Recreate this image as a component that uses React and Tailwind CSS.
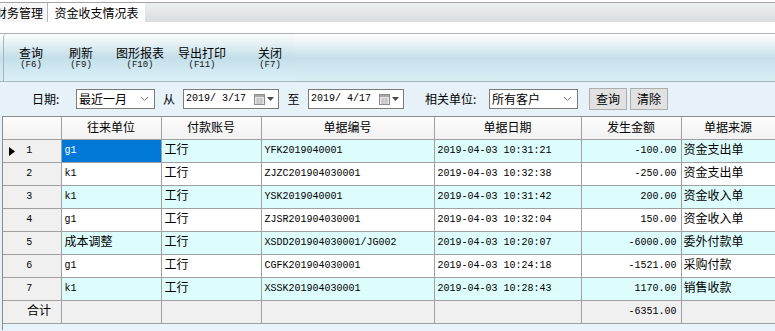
import React from "react";

const CJK = "font-['Noto_Sans_CJK_SC','Noto_Sans',sans-serif]";
const MONO = "font-['Liberation_Mono','Noto_Sans_CJK_SC',monospace]";

const rows = [
  { n: 1, unit: "g1", acct: "工行", no: "YFK2019040001", date: "2019-04-03 10:31:21", amt: "-100.00", src: "资金支出单" },
  { n: 2, unit: "k1", acct: "工行", no: "ZJZC201904030001", date: "2019-04-03 10:32:38", amt: "-250.00", src: "资金支出单" },
  { n: 3, unit: "k1", acct: "工行", no: "YSK2019040001", date: "2019-04-03 10:31:42", amt: "200.00", src: "资金收入单" },
  { n: 4, unit: "g1", acct: "工行", no: "ZJSR201904030001", date: "2019-04-03 10:32:04", amt: "150.00", src: "资金收入单" },
  { n: 5, unit: "成本调整", acct: "工行", no: "XSDD201904030001/JG002", date: "2019-04-03 10:20:07", amt: "-6000.00", src: "委外付款单" },
  { n: 6, unit: "g1", acct: "工行", no: "CGFK201904030001", date: "2019-04-03 10:24:18", amt: "-1521.00", src: "采购付款" },
  { n: 7, unit: "k1", acct: "工行", no: "XSSK201904030001", date: "2019-04-03 10:28:43", amt: "1170.00", src: "销售收款" },
];

const tools = [
  { label: "查询", key: "(F6)", w: "w-[44px]", ml: "ml-[5px]" },
  { label: "刷新", key: "(F9)", w: "w-[44px]", ml: "ml-[6px]" },
  { label: "图形报表", key: "(F10)", w: "w-[62px]", ml: "ml-[6px]" },
  { label: "导出打印", key: "(F11)", w: "w-[50px]", ml: "ml-[6px]" },
  { label: "关闭", key: "(F7)", w: "w-[38px]", ml: "ml-[24px]" },
];

function Chevron() {
  return (
    <svg width="9" height="6" viewBox="0 0 9 6" className="shrink-0">
      <polyline points="1,1 4.5,4.5 8,1" fill="none" stroke="#7a7a7a" strokeWidth="1" />
    </svg>
  );
}

function CalIcon() {
  return (
    <span className="flex items-center gap-[2px] shrink-0">
      <svg width="11" height="11" viewBox="0 0 11 11">
        <rect x="0.5" y="0.5" width="10" height="10" fill="#e8e8e8" stroke="#8c8c8c" />
        <rect x="1" y="1" width="9" height="2" fill="#a8a8a8" />
        <path d="M2 5h7M2 7h7M2 9h7M4 4v6M7 4v6" stroke="#bdbdbd" strokeWidth="1" />
      </svg>
      <svg width="7" height="4" viewBox="0 0 7 4">
        <polygon points="0,0 7,0 3.5,4" fill="#4a4a4a" />
      </svg>
    </span>
  );
}

function DateBox({ value }) {
  return (
    <div className="w-[96px] h-[20px] bg-white border border-[#7a7a7a] flex items-center justify-between pl-[2px] pr-[4px]">
      <span className={`${MONO} text-[10px] text-black`}>{value}</span>
      <CalIcon />
    </div>
  );
}

function SelectBox({ value, w }) {
  return (
    <div className={`${w} h-[20px] bg-white border border-[#7a7a7a] flex items-center justify-between pl-[2px] pr-[5px]`}>
      <span className="text-[12px] leading-none text-black">{value}</span>
      <Chevron />
    </div>
  );
}

export default function App() {
  const cell = "border-r border-b border-[#a0a0a0] h-[23px] px-[3px] whitespace-nowrap overflow-hidden";
  const cjkCell = `${cell} pb-[4px]`;
  const monoCell = `${cell} ${MONO} text-[10px]`;
  return (
    <div className={`${CJK} w-[775px] h-[331px] overflow-hidden bg-[#e6f2f8] text-black`}>
      {/* tab strip */}
      <div className="h-[22px] bg-white pt-[2px]">
        <div className="h-[20px] border-t border-[#a3a3a3] bg-gradient-to-b from-[#eef0f1] to-[#d9dde0] flex overflow-hidden">
          <div className="w-[48px] h-full bg-[#f7f7f7] border-r border-[#b8b8b8] flex items-center overflow-hidden">
            <span className="text-[12px] leading-none -ml-[5px] whitespace-nowrap">财务管理</span>
          </div>
          <div className="w-[97px] h-[20px] bg-white flex items-center justify-center">
            <span className="text-[12px] leading-none whitespace-nowrap">资金收支情况表</span>
          </div>
        </div>
      </div>
      <div className="h-[11px] bg-white" />
      {/* toolbar */}
      <div className="h-[49px] border-t border-b border-[#a8b4b8] bg-gradient-to-b from-[#ffffff] via-[#c6e0ea] to-[#d8eef5] flex pl-[3px]">
        <div className="w-[292px] h-full rounded-tl-[4px] border-l border-[#a8b4b8] bg-gradient-to-b from-[#fbfdfd] via-[#c4dfe9] to-[#dbf0f8] flex items-center pt-[1px]">
          {tools.map((t) => (
            <div key={t.label} className={`${t.w} ${t.ml} flex flex-col items-center gap-[1px]`}>
              <span className="block h-[12px] text-[12px] leading-[12px] whitespace-nowrap">{t.label}</span>
              <span className={`block h-[10px] ${MONO} text-[9px] leading-[10px] whitespace-nowrap text-[#111]`}>{t.key}</span>
            </div>
          ))}
        </div>
        <div className="flex-1" />
      </div>
      {/* filter row */}
      <div className="h-[34px] flex items-center text-[12px] leading-none">
        <span className="w-[76px] pl-[32px]">日期:</span>
        <SelectBox value="最近一月" w="w-[79px]" />
        <span className="w-[28px] text-center">从</span>
        <DateBox value="2019/ 3/17" />
        <span className="w-[29px] text-center">至</span>
        <DateBox value="2019/ 4/17" />
        <span className="w-[85px] pl-[21px] whitespace-nowrap">相关单位:</span>
        <SelectBox value="所有客户" w="w-[89px]" />
        <button className="ml-[11px] w-[38px] h-[22px] bg-[#e1e1e1] border border-[#adadad] text-[12px] leading-none">查询</button>
        <button className="ml-[3px] w-[38px] h-[22px] bg-[#e1e1e1] border border-[#adadad] text-[12px] leading-none">清除</button>
      </div>
      {/* grid */}
      <div className="ml-[2px] border-l border-t border-[#8c8c8c] bg-[#e8f4fb] h-[214px] overflow-hidden">
        <table className="table-fixed border-collapse w-[772px] text-[12px] leading-none">
          <colgroup>
            <col className="w-[58px]" />
            <col className="w-[100px]" />
            <col className="w-[100px]" />
            <col className="w-[173px]" />
            <col className="w-[147px]" />
            <col className="w-[100px]" />
            <col className="w-[94px]" />
          </colgroup>
          <thead>
            <tr className="bg-gradient-to-b from-[#fdfdfd] to-[#f1f1f1]">
              {["", "往来单位", "付款账号", "单据编号", "单据日期", "发生金额", "单据来源"].map((h, i) => (
                <th key={i} className="border-r border-b border-[#a0a0a0] h-[22px] pb-[2px] font-normal text-center text-[12px]">
                  {h}
                </th>
              ))}
            </tr>
          </thead>
          <tbody>
            {rows.map((r) => {
              const bg = r.n % 2 === 1 ? "bg-[#ddfcfc]" : "bg-white";
              const isMono = /^[a-z0-9]+$/.test(r.unit);
              return (
                <tr key={r.n} className={bg}>
                  <td className={`${monoCell} bg-[#f0f0f0] relative text-center`}>
                    {r.n === 1 && (
                      <svg width="6" height="9" viewBox="0 0 6 9" className="absolute left-[6px] top-[7px]">
                        <polygon points="0,0 6,4.5 0,9" fill="#000" />
                      </svg>
                    )}
                    <span className="ml-[-5px]">{r.n}</span>
                  </td>
                  <td className={`${isMono ? monoCell : cjkCell} ${r.n === 1 ? "bg-[#0078d7] text-white" : ""}`}>
                    {r.unit}
                  </td>
                  <td className={cjkCell}>{r.acct}</td>
                  <td className={monoCell}>{r.no}</td>
                  <td className={monoCell}>{r.date}</td>
                  <td className={`${monoCell} text-right pr-[4px]`}>{r.amt}</td>
                  <td className={`${cjkCell} pl-[2px]`}>{r.src}</td>
                </tr>
              );
            })}
            <tr className="bg-[#f0f0f0]">
              <td className={`${cjkCell} text-left pl-[24px]`}>合计</td>
              <td className={cell} />
              <td className={cell} />
              <td className={cell} />
              <td className={cell} />
              <td className={`${monoCell} text-right pr-[4px]`}>-6351.00</td>
              <td className={cell} />
            </tr>
          </tbody>
        </table>
      </div>
    </div>
  );
}
